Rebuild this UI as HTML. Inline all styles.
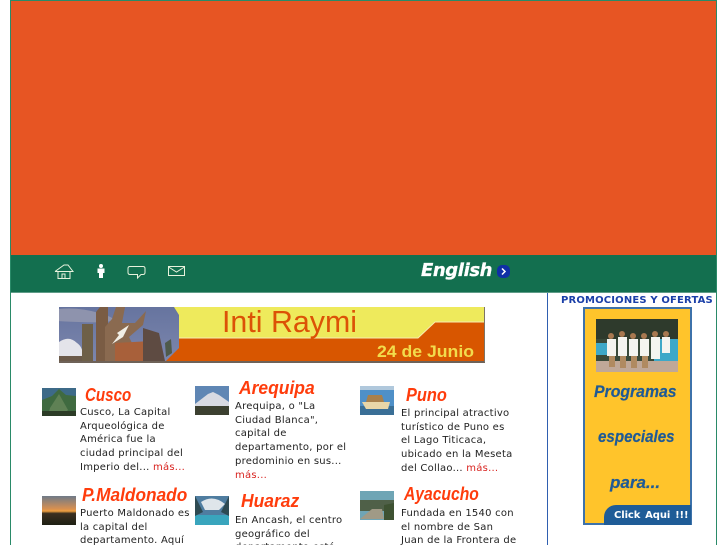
<!DOCTYPE html>
<html><head><meta charset="utf-8"><style>
html,body{margin:0;padding:0;background:#fff;width:727px;height:545px;overflow:hidden}
#w{position:relative;width:727px;height:545px;overflow:hidden;background:#fff}
.a{position:absolute}
.t{position:absolute;font:10px/13.7px "DejaVu Sans",sans-serif;color:#222;white-space:nowrap;letter-spacing:.24px}
.t i{font-style:normal;color:#d8231f}
.h{position:absolute;font:italic bold 18px/22px "Liberation Sans",sans-serif;color:#ff3c0c;white-space:nowrap;transform-origin:0 0}
.p{position:absolute;font:italic bold 17px/22px "Liberation Sans",sans-serif;color:#1f5a96;white-space:nowrap;transform-origin:0 0;-webkit-text-stroke:.2px #1f5a96}
svg{position:absolute;display:block}
</style></head><body><div id="w">
<div class="a" style="left:10px;top:0;width:1px;height:545px;background:#2a8a68"></div>
<div class="a" style="left:716px;top:0;width:1px;height:545px;background:#2a8a68"></div>
<div class="a" style="left:11px;top:0;width:705px;height:1px;background:#2a8a68"></div>
<div class="a" style="left:11px;top:1px;width:705px;height:254px;background:#e75523"></div>
<div class="a" style="left:11px;top:255px;width:705px;height:38px;background:#136f4f"></div>
<div class="a" style="left:11px;top:292px;width:705px;height:1px;background:#5f9c88"></div>

<svg style="left:50px;top:260px" width="140" height="22" viewBox="0 0 140 22" fill="none" stroke="#e8f2dc" stroke-width="1">
<path d="M5 11.500L14 5H18L23 11.500H5 M8 12V18.500H20V12 M12 18V14H15V18"/>
<circle cx="51" cy="6" r="2" fill="#fff" stroke="none"/>
<path d="M47.500 8.500H54.500V13H53V18H49V13H47.500Z" fill="#fff" stroke="none"/>
<path d="M80 6.500H93Q95 6.500 95 8.500V12.500Q95 14.500 93 14.500H91L87.500 18V14.500H80Q78 14.500 78 12.500V8.500Q78 6.500 80 6.500Z"/>
<path d="M118.500 6.500H134.500V15.500H118.500Z M118.500 7L126.500 12L134.500 7"/>
</svg>

<div class="a" style="left:421px;top:260px;font:italic bold 18px/22px 'DejaVu Sans',sans-serif;color:#fff;white-space:nowrap;letter-spacing:-.4px;-webkit-text-stroke:.3px #fff">English</div>
<div class="a" style="left:497px;top:265px;width:13px;height:13px;border-radius:5px;background:#0f2fa6"></div>
<svg style="left:497px;top:265px" width="13" height="13" fill="none" stroke="#fff" stroke-width="1.500"><path d="M5 3.500L8 6.500L5 9.500"/></svg>

<div class="a" style="left:547px;top:293px;width:1px;height:252px;background:#2f5fb0"></div>
<div class="a" style="left:561px;top:294px;font:bold 10px/13px 'DejaVu Sans',sans-serif;color:#1a3fa8;white-space:nowrap;letter-spacing:.16px">PROMOCIONES Y OFERTAS</div>

<!-- Inti Raymi banner -->
<svg style="left:59px;top:307px" width="426" height="56" viewBox="0 0 426 56">
<defs><linearGradient id="s" x1="0" y1="0" x2="0" y2="1"><stop offset="0" stop-color="#66749f"/><stop offset="1" stop-color="#7c86ad"/></linearGradient></defs>
<rect x="100" y="0" width="325" height="54" fill="#eeea5c"/>
<path d="M100 31H359L376 15H425V54H100Z" fill="#d85600"/>
<path d="M120 31H359L376 15H425" fill="none" stroke="#f6eeb0" stroke-width="1"/>
<path d="M0 0H115L120 8V41L107 54H0Z" fill="url(#s)"/>
<path d="M0 2Q20 0 40 6T52 14T20 15T0 14Z" fill="#8e93ad"/>
<path d="M0 35Q10 28 18 36Q24 40 24 50H0Z" fill="#e4e4ea"/>
<rect x="0" y="49" width="30" height="5" fill="#6b5a4a"/>
<path d="M23 17H34V54H23Z" fill="#6e6048"/>
<path d="M37 5L41 0H49V54H37Z" fill="#7a5c44"/>
<path d="M46 20L53 12L57 0H66L63 16L76 16L87 4L84 18L70 30L82 54H46Z" fill="#8a6a50"/>
<path d="M49 17L58 26L70 18L64 30L53 37L60 28Z" fill="#f2efe6"/>
<path d="M56 36L92 34L92 54H56Z" fill="#a8603a"/>
<path d="M84 21L100 26L106 54H84Z" fill="#5e4b42"/>
<path d="M106 36L112 32L113 46L107 50Z" fill="#4f5a4a"/>
<rect x="0" y="54" width="426" height="2" fill="#6e6258"/>
<rect x="425" y="0" width="1" height="55" fill="#7d7466"/>
<text x="163" y="25" font-family="Liberation Sans,sans-serif" font-size="31" fill="#dc5206" textLength="135" lengthAdjust="spacingAndGlyphs">Inti Raymi</text>
<text x="318" y="50" font-family="Liberation Sans,sans-serif" font-weight="bold" font-size="17" fill="#f2dc4c" textLength="97" lengthAdjust="spacingAndGlyphs">24 de Junio</text>
</svg>

<!-- Thumbs -->
<svg style="left:42px;top:388px" width="34" height="28" viewBox="0 0 34 28"><rect width="34" height="28" fill="#3d6a88"/><path d="M0 12L10 8L17 1L24 7L34 8V28H0Z" fill="#3f6a40"/><path d="M8 20L17 6L26 22L20 28H6Z" fill="#5f8155"/><rect y="23" width="34" height="5" fill="#2c3c26"/></svg>
<svg style="left:195px;top:386px" width="34" height="29" viewBox="0 0 34 29"><rect width="34" height="29" fill="#5f86b4"/><path d="M0 18L13 8L18 6L24 9L34 16V24H0Z" fill="#d8dae2"/><rect y="20" width="34" height="9" fill="#3c4030"/></svg>
<svg style="left:360px;top:386px" width="34" height="29" viewBox="0 0 34 29"><rect width="34" height="29" fill="#4f90c8"/><rect y="20" width="34" height="9" fill="#3a6f96"/><path d="M2 16H30L28 23H6Z" fill="#e8d6a8"/><path d="M8 9H22L24 16H6Z" fill="#a8804c"/><rect y="0" width="34" height="4" fill="#b0c8dc"/></svg>
<svg style="left:42px;top:496px" width="34" height="29" viewBox="0 0 34 29"><defs><linearGradient id="u" x1="0" y1="0" x2="0" y2="1"><stop offset="0" stop-color="#6f7a88"/><stop offset=".45" stop-color="#d89050"/><stop offset=".52" stop-color="#f0a040"/><stop offset=".6" stop-color="#3c3020"/><stop offset="1" stop-color="#1e2014"/></linearGradient></defs><rect width="34" height="29" fill="url(#u)"/></svg>
<svg style="left:195px;top:496px" width="34" height="29" viewBox="0 0 34 29"><rect width="34" height="29" fill="#39a5bd"/><path d="M0 0H34V19H0Z" fill="#4f7da0"/><path d="M6 6Q18 -2 30 8L24 14H10Z" fill="#dfe5ea"/><path d="M0 0L8 16L0 20Z M34 0L26 16L34 20Z" fill="#2e4a52"/></svg>
<svg style="left:360px;top:491px" width="34" height="29" viewBox="0 0 34 29"><rect width="34" height="29" fill="#6fa5b5"/><rect y="9" width="34" height="11" fill="#4f6048"/><path d="M0 28L12 18H22L24 28Z" fill="#a09a86"/><path d="M24 14L34 12V29H24Z" fill="#3e5232"/></svg>

<!-- Titles -->
<div class="h" style="left:85px;top:384px;transform:scaleX(.84)">Cusco</div>
<div class="h" style="left:239px;top:377px;transform:scaleX(.97)">Arequipa</div>
<div class="h" style="left:406px;top:384px;transform:scaleX(.91)">Puno</div>
<div class="h" style="left:82px;top:484px;transform:scaleX(.96)">P.Maldonado</div>
<div class="h" style="left:241px;top:490px;transform:scaleX(.97)">Huaraz</div>
<div class="h" style="left:404px;top:483px;transform:scaleX(.87)">Ayacucho</div>

<!-- Text -->
<div class="t" style="left:80px;top:406px">Cusco, La Capital<br>Arqueológica de<br>América fue la<br>ciudad principal del<br>Imperio del... <i>más...</i></div>
<div class="t" style="left:235px;top:400px">Arequipa, o "La<br>Ciudad Blanca",<br>capital de<br>departamento, por el<br>predominio en sus...<br><i>más...</i></div>
<div class="t" style="left:401px;top:407px">El principal atractivo<br>turístico de Puno es<br>el Lago Titicaca,<br>ubicado en la Meseta<br>del Collao... <i>más...</i></div>
<div class="t" style="left:80px;top:507px">Puerto Maldonado es<br>la capital del<br>departamento. Aquí</div>
<div class="t" style="left:235px;top:514px">En Ancash, el centro<br>geográfico del<br>departamento está</div>
<div class="t" style="left:401px;top:507px">Fundada en 1540 con<br>el nombre de San<br>Juan de la Frontera de</div>

<!-- Promo -->
<div class="a" style="left:583px;top:307px;width:105px;height:214px;background:#ffc42b;border:2px solid #3d72aa"></div>
<svg style="left:596px;top:319px" width="82" height="53" viewBox="0 0 82 53">
<rect width="82" height="53" fill="#3a4a3a"/><rect y="0" width="82" height="20" fill="#2e3a2c"/>
<rect x="58" y="20" width="24" height="22" fill="#3ea8c8"/><rect x="0" y="24" width="14" height="12" fill="#3ea8c8"/>
<rect y="42" width="82" height="11" fill="#c0a898"/>
<g fill="#f4f4f0"><rect x="11" y="20" width="9" height="17"/><rect x="22" y="18" width="9" height="19"/><rect x="33" y="20" width="9" height="17"/><rect x="44" y="20" width="9" height="17"/><rect x="55" y="18" width="9" height="22"/><rect x="66" y="18" width="8" height="16"/></g>
<g fill="#b08a60"><rect x="13" y="37" width="6" height="11"/><rect x="24" y="37" width="6" height="12"/><rect x="35" y="37" width="6" height="12"/><rect x="46" y="37" width="6" height="12"/></g>
<g fill="#a87850"><circle cx="15" cy="17" r="3"/><circle cx="26" cy="15" r="3"/><circle cx="37" cy="17" r="3"/><circle cx="48" cy="17" r="3"/><circle cx="59" cy="15" r="3"/><circle cx="70" cy="15" r="3"/></g>
</svg>
<div class="p" style="left:594px;top:381px;transform:scaleX(.93)">Programas</div>
<div class="p" style="left:598px;top:426px;transform:scaleX(.89)">especiales</div>
<div class="p" style="left:610px;top:472px">para...</div>
<div class="a" style="left:604px;top:505px;width:87px;height:20px;background:#1f5c97;border-radius:12px 0 0 0"></div>
<div class="a" style="left:614px;top:509px;font:bold 10px/14px 'DejaVu Sans',sans-serif;color:#fff;white-space:nowrap;word-spacing:1.500px;letter-spacing:-.1px">Click Aqui !!!</div>
</div></body></html>
